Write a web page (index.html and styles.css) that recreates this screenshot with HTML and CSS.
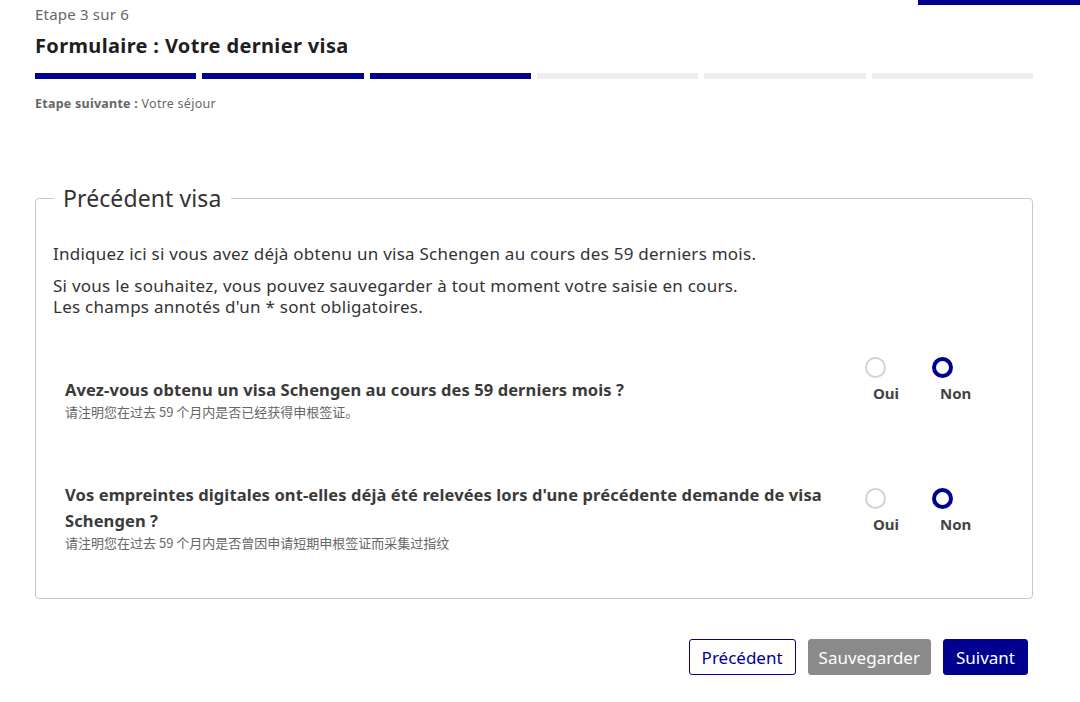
FILE: index.html
```html
<!DOCTYPE html>
<html lang="fr">
<head>
<meta charset="utf-8">
<title>Formulaire : Votre dernier visa</title>
<link rel="stylesheet" href="styles.css">
</head>
<body>
<div class="top-accent"></div>
<main class="page">
  <header class="stepper">
    <p class="stepper-state">Etape 3 sur 6</p>
    <h1 class="stepper-title">Formulaire : Votre dernier visa</h1>
    <div class="stepper-steps">
      <span class="step step--done"></span>
      <span class="step step--done"></span>
      <span class="step step--done"></span>
      <span class="step"></span>
      <span class="step"></span>
      <span class="step"></span>
    </div>
    <p class="stepper-next"><b>Etape suivante :</b> Votre séjour</p>
  </header>

  <fieldset class="panel">
    <legend class="panel-legend">Précédent visa</legend>
    <p class="intro">Indiquez ici si vous avez déjà obtenu un visa Schengen au cours des 59 derniers mois.</p>
    <p class="intro intro--second">Si vous le souhaitez, vous pouvez sauvegarder à tout moment votre saisie en cours.<br>Les champs annotés d'un * sont obligatoires.</p>

    <div class="q-row q-row--first">
      <div class="q-text">
        <p class="q-label">Avez-vous obtenu un visa Schengen au cours des 59 derniers mois ?</p>
        <p class="q-hint">请注明您在过去 59 个月内是否已经获得申根签证。</p>
      </div>
      <div class="q-options">
        <label class="opt"><span class="radio"></span><span class="opt-label">Oui</span></label>
        <label class="opt"><span class="radio radio--on"></span><span class="opt-label">Non</span></label>
      </div>
    </div>

    <div class="q-row q-row--second">
      <div class="q-text">
        <p class="q-label">Vos empreintes digitales ont-elles déjà été relevées lors d'une précédente demande de visa Schengen ?</p>
        <p class="q-hint">请注明您在过去 59 个月内是否曾因申请短期申根签证而采集过指纹</p>
      </div>
      <div class="q-options">
        <label class="opt"><span class="radio"></span><span class="opt-label">Oui</span></label>
        <label class="opt"><span class="radio radio--on"></span><span class="opt-label">Non</span></label>
      </div>
    </div>
  </fieldset>

  <div class="actions">
    <button class="btn btn--outline">Précédent</button>
    <button class="btn btn--grey">Sauvegarder</button>
    <button class="btn btn--primary">Suivant</button>
  </div>
</main>
</body>
</html>
```

FILE: styles.css
```css
* { box-sizing: border-box; }
html, body { margin: 0; padding: 0; background: #fff; }
body {
  font-family: "Noto Sans", "Noto Sans CJK SC", sans-serif;
  color: #3a3a3a;
  position: relative;
  width: 1080px;
  height: 702px;
  overflow: hidden;
}
.top-accent {
  position: absolute;
  top: 0;
  right: 0;
  width: 162px;
  height: 5px;
  background: #000091;
}
.page {
  padding: 0 47px 0 35px;
}
p { margin: 0; }

.stepper-state {
  font-size: 15px;
  line-height: 20px;
  letter-spacing: 0.2px;
  color: #666;
  padding-top: 4px;
}
.stepper-title {
  margin: 0;
  font-size: 20px;
  line-height: 28px;
  letter-spacing: 0.35px;
  font-weight: 700;
  color: #1e1e1e;
  padding-top: 8px;
}
.stepper-steps {
  display: flex;
  gap: 6px;
  margin-top: 13px;
}
.step {
  flex: 1;
  height: 6px;
  background: #eeeeee;
}
.step--done { background: #000091; }
.stepper-next {
  margin-top: 16px;
  font-size: 12.5px;
  line-height: 18px;
  letter-spacing: 0.25px;
  color: #666;
}
.stepper-next b { font-weight: 700; }

.panel {
  margin: 71px 0 0;
  border: 1px solid #c8c8c8;
  border-radius: 4px;
  padding: 31px 0 46px 17px;
  min-width: 0;
}
.panel-legend {
  margin-left: 1px;
  padding: 0 9px 0 9px;
  font-size: 23px;
  line-height: 28px;
  letter-spacing: 0.1px;
  color: #333;
}
.intro {
  font-size: 17px;
  line-height: 22px;
  letter-spacing: 0.25px;
  color: #333;
}
.intro--second {
  margin-top: 10px;
  line-height: 21px;
}

.q-row {
  display: flex;
  align-items: flex-end;
  justify-content: space-between;
  padding-left: 12px;
  padding-right: 60px;
}
.q-row--first { margin-top: 40px; }
.q-row--second { margin-top: 61px; }
.q-text { max-width: 770px; }
.q-label {
  font-size: 16.5px;
  font-weight: 700;
  line-height: 26px;
  letter-spacing: 0.1px;
  color: #3a3a3a;
}
.q-hint {
  font-size: 13px;
  line-height: 18px;
  color: #666;
  font-family: "Noto Sans CJK SC", "Noto Sans", sans-serif;
}
.q-options {
  display: flex;
  gap: 27px;
  padding-bottom: 18px;
}
.opt {
  display: flex;
  flex-direction: column;
  align-items: flex-start;
  width: 40px;
}
.radio {
  width: 21px;
  height: 21px;
  border-radius: 50%;
  border: 2px solid #d0d3d8;
  background: #fff;
}
.radio--on {
  border: 4px solid #000091;
}
.opt-label {
  margin-top: 5px;
  padding-left: 8px;
  font-size: 15px;
  line-height: 20px;
  font-weight: 700;
  color: #444;
}

.actions {
  display: flex;
  justify-content: flex-end;
  gap: 12px;
  margin-top: 40px;
  padding-right: 5px;
}
.btn {
  height: 36px;
  padding: 0 12px;
  font-family: "Noto Sans", sans-serif;
  font-size: 17px;
  border-radius: 3px;
  border: 1px solid transparent;
}
.btn--outline {
  background: #fff;
  color: #000091;
  border-color: #000091;
}
.btn--grey {
  background: #8a8a8a;
  color: #fff;
  border-color: #8a8a8a;
  padding: 0 10px;
}
.btn--primary {
  background: #000091;
  color: #fff;
  border-color: #000091;
}
```
